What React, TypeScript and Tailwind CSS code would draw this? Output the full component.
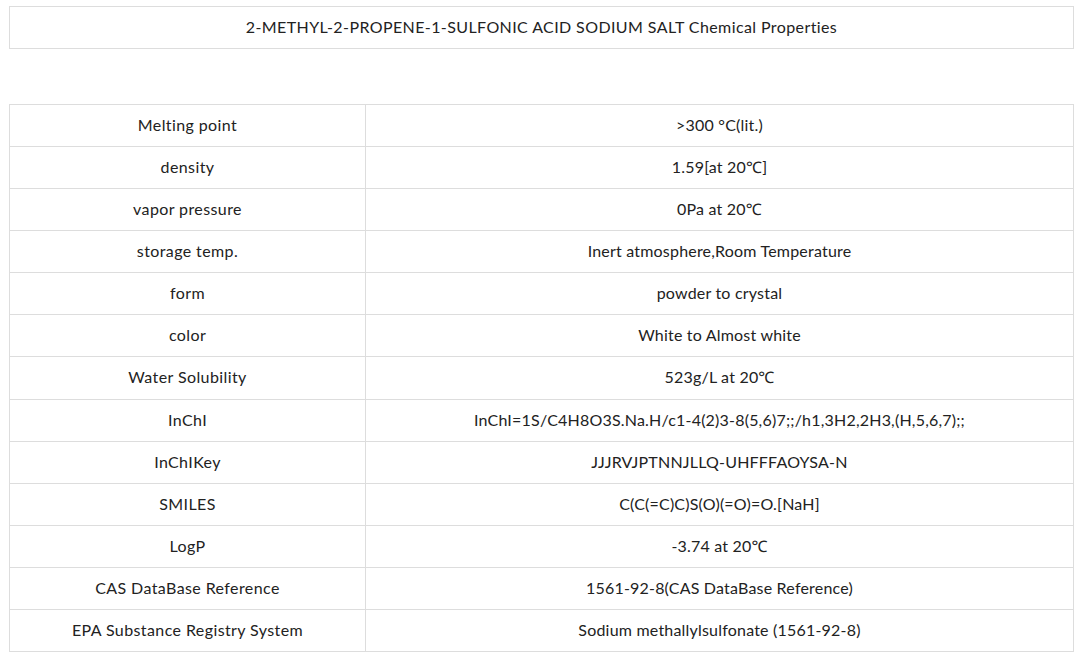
import React from "react";

const rows: [string, string][] = [
  ["Melting point", ">300 °C(lit.)"],
  ["density", "1.59[at 20℃]"],
  ["vapor pressure", "0Pa at 20℃"],
  ["storage temp.", "Inert atmosphere,Room Temperature"],
  ["form", "powder to crystal"],
  ["color", "White to Almost white"],
  ["Water Solubility", "523g/L at 20℃"],
  ["InChI", "InChI=1S/C4H8O3S.Na.H/c1-4(2)3-8(5,6)7;;/h1,3H2,2H3,(H,5,6,7);;"],
  ["InChIKey", "JJJRVJPTNNJLLQ-UHFFFAOYSA-N"],
  ["SMILES", "C(C(=C)C)S(O)(=O)=O.[NaH]"],
  ["LogP", "-3.74 at 20℃"],
  ["CAS DataBase Reference", "1561-92-8(CAS DataBase Reference)"],
  ["EPA Substance Registry System", "Sodium methallylsulfonate (1561-92-8)"],
];

export default function App() {
  return (
    <div
      className="w-[1084px] h-[657px] bg-white text-[#222] text-[16px] tracking-[0.4px] pl-[9px] pr-[10px] pt-[6px]"
      style={{ fontFamily: "Lato, 'Noto Sans', sans-serif" }}
    >
      <div className="h-[43px] border border-[#dddddd] flex items-center justify-center pb-[2px]">
        2-METHYL-2-PROPENE-1-SULFONIC ACID SODIUM SALT Chemical Properties
      </div>
      <table className="mt-[55px] w-full border-collapse table-fixed">
        <colgroup>
          <col className="w-[356px]" />
          <col />
        </colgroup>
        <tbody>
          {rows.map(([k, v], i) => (
            <tr key={k} className={i === 6 ? "h-[43px]" : "h-[42px]"}>
              <td className="border border-[#dddddd] text-center align-middle p-0 pb-[2px]">{k}</td>
              <td className="border border-[#dddddd] text-center align-middle p-0 pb-[2px] tracking-[0.2px]">{v}</td>
            </tr>
          ))}
        </tbody>
      </table>
    </div>
  );
}
